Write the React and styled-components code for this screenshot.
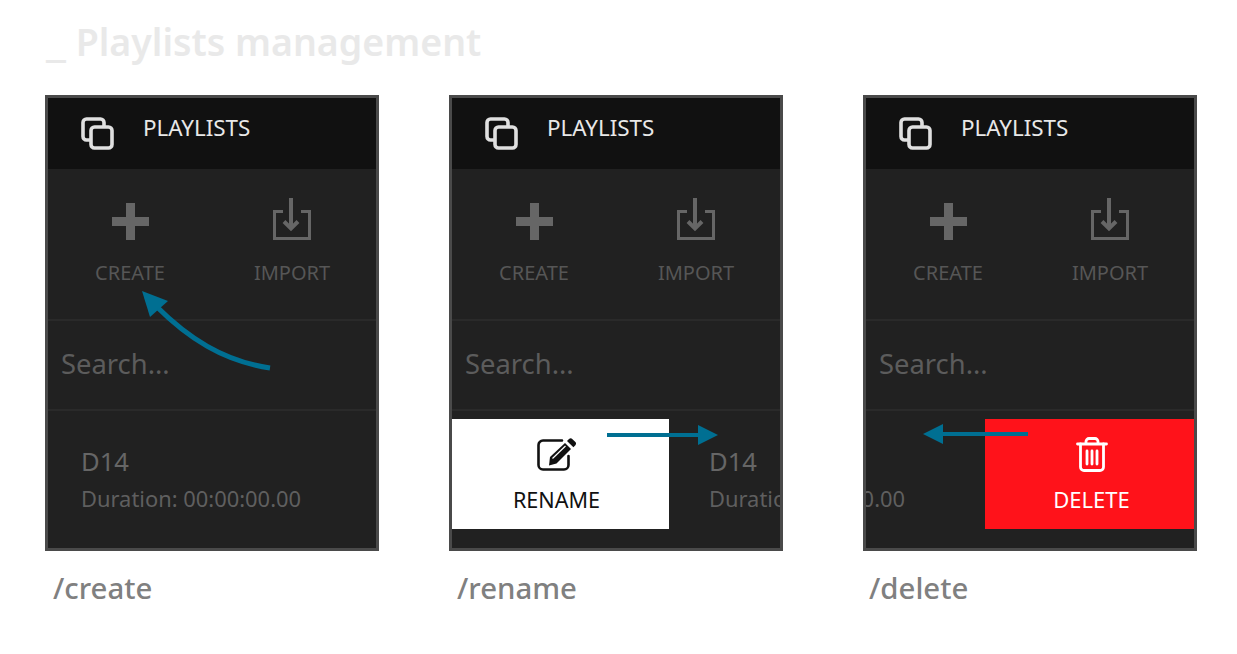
import React from "react";
import styled, { createGlobalStyle } from "styled-components";

const Global = createGlobalStyle`
  html, body { margin: 0; padding: 0; background: #fff; }
  body { font-family: "Noto Sans", "Open Sans", sans-serif; }
`;

const Page = styled.div`
  width: 1237px;
  height: 654px;
  box-sizing: border-box;
  padding: 17px 0 0 45px;
  overflow: hidden;
`;
const Title = styled.h1`
  margin: 0 0 25px 1px;
  height: 53px;
  font-size: 37.5px;
  line-height: 50px;
  font-weight: 600;
  color: #e9e9e9;
  white-space: nowrap;
`;
const Underscore = styled.span`
  font-size: 47px;
  line-height: 1px;
`;
const Columns = styled.div`
  display: flex;
`;
const Column = styled.section`
  width: 334px;
  margin-left: ${(p) => p.$gap || 0}px;
`;
const Phone = styled.div`
  position: relative;
  box-sizing: border-box;
  height: 456px;
  border: 3px solid #4a4a4a;
  background: #212121;
  display: flex;
  flex-direction: column;
  overflow: hidden;
`;
const Header = styled.header`
  height: 71px;
  box-sizing: border-box;
  flex: none;
  background: #111;
  display: flex;
  align-items: center;
  padding: 0 0 12px 33px;
  gap: 28px;
  color: #e8e8e8;
  font-size: 22.4px;
  line-height: 30px;
`;
const HeaderIcon = styled.div`
  display: flex;
  margin-top: 13px;
`;
const Actions = styled.div`
  height: 150px;
  flex: none;
  display: grid;
  grid-template-columns: 162px 162px;
  padding-left: 1px;
  border-bottom: 2px solid #2a2a2a;
`;
const Action = styled.div`
  display: flex;
  flex-direction: column;
  align-items: center;
  color: #565656;
  font-size: 20px;
  line-height: 26px;
  padding-top: 23px;
`;
const IconSlot = styled.div`
  height: 48px;
  margin-bottom: 20px;
  display: flex;
  align-items: flex-end;
  padding-left: ${(p) => p.$nudge || 0}px;
`;
const Search = styled.div`
  height: 88px;
  box-sizing: border-box;
  flex: none;
  display: flex;
  align-items: center;
  padding: 0 0 4px 13px;
  font-size: 27.4px;
  color: #5c5c5c;
`;
const Divider = styled.div`
  flex: none;
  height: 2px;
  background: #2a2a2a;
`;
const Row = styled.div`
  display: flex;
  align-items: stretch;
  height: 110px;
  margin-top: 8px;
  white-space: nowrap;
  overflow: hidden;
`;
const Item = styled.div`
  flex: none;
  width: 220px;
  margin-left: ${(p) => p.$left}px;
  display: flex;
  flex-direction: column;
  padding-top: 25px;
`;
const ItemName = styled.div`
  font-size: 25.6px;
  line-height: 36px;
  color: #666;
`;
const ItemMeta = styled.div`
  font-size: 21.9px;
  line-height: 30px;
  margin-top: 4px;
  color: #5f5f5f;
`;
const Swipe = styled.div`
  flex: none;
  width: ${(p) => p.$width}px;
  margin-left: ${(p) => (p.$auto ? "auto" : "0")};
  padding: 17px ${(p) => p.$right || 0}px 0 ${(p) => p.$leftPad || 0}px;
  background: ${(p) => p.$bg};
  color: ${(p) => p.$fg};
  display: flex;
  flex-direction: column;
  align-items: center;
  font-size: ${(p) => p.$size}px;
  line-height: 27px;
  box-sizing: border-box;
`;
const SwipeIcon = styled.div`
  height: 37px;
  margin-bottom: 13px;
  display: flex;
  align-items: center;
`;
const Caption = styled.div`
  margin: 19px 0 0 ${(p) => p.$left}px;
  font-size: 29.4px;
  line-height: 36px;
  font-weight: 500;
  color: #808080;
`;
const Overlay = styled.svg`
  position: absolute;
  left: 0;
  top: 0;
  pointer-events: none;
`;

const CopyIcon = () => (
  <svg width="34" height="34" viewBox="0 0 34 34" fill="none" stroke="#e0e0e0" strokeWidth="3.6">
    <rect x="2" y="2" width="21" height="21" rx="3.5" />
    <rect x="10" y="10" width="21" height="21" rx="3.5" fill="#111" />
  </svg>
);
const PlusIcon = () => (
  <svg width="37" height="37" viewBox="0 0 37 37" fill="#666">
    <rect x="14" y="0" width="9" height="37" />
    <rect x="0" y="14" width="37" height="9" />
  </svg>
);
const ImportIcon = () => (
  <svg width="38" height="42" viewBox="0 0 38 42" fill="none" stroke="#666">
    <path d="M10 13.5H1.5V40.5H36.5V13.5H28" strokeWidth="3" />
    <path d="M18 0V30" strokeWidth="4" />
    <path d="M11 23.5L18 30.5L25 23.5" strokeWidth="4" />
  </svg>
);
const EditIcon = () => (
  <svg width="41" height="34" viewBox="0 0 41 34">
    <path d="M26 2.5H7a4.5 4.5 0 0 0-4.5 4.5v20A4.5 4.5 0 0 0 7 31.5h21a4.5 4.5 0 0 0 4.5-4.5V18" fill="none" stroke="#111" strokeWidth="2.6" strokeLinecap="round" />
    <path d="M14 19L29 5l6 6L20.5 25.5l-7.5 2z" fill="#111" />
    <path d="M31 3l2-2c1-1 2.4-1 3.2-.1l3.2 3.2c.9.9.9 2.2 0 3.1l-2 2z" fill="#111" />
    <path d="M16.5 20.5L29.5 8" stroke="#fff" strokeWidth="1.2" />
  </svg>
);
const TrashIcon = () => (
  <svg width="32" height="35" viewBox="0 0 32 35" fill="none" stroke="#fff" strokeWidth="2.8" strokeLinecap="round">
    <path d="M1.5 7H30.5" />
    <path d="M4.5 7V30a3.5 3.5 0 0 0 3.5 3.5H24a3.5 3.5 0 0 0 3.5-3.5V7" />
    <path d="M10 6.5V4.5A3 3 0 0 1 13 1.5H19a3 3 0 0 1 3 3V6.5" />
    <path d="M11 14V27M16 14V27M21 14V27" />
  </svg>
);

const Panel = ({ children, row }) => (
  <Phone>
    <Header>
      <HeaderIcon><CopyIcon /></HeaderIcon>
      <span>PLAYLISTS</span>
    </Header>
    <Actions>
      <Action>
        <IconSlot $nudge={1}><PlusIcon /></IconSlot>
        CREATE
      </Action>
      <Action>
        <IconSlot><ImportIcon /></IconSlot>
        IMPORT
      </Action>
    </Actions>
    <Search>Search...</Search>
    <Divider />
    {row}
    {children}
  </Phone>
);

const Entry = ({ left }) => (
  <Item $left={left}>
    <ItemName>D14</ItemName>
    <ItemMeta>Duration: 00:00:00.00</ItemMeta>
  </Item>
);

const TEAL = "#006f92";

export default function App() {
  return (
    <Page>
      <Global />
      <Title><Underscore>_</Underscore> Playlists management</Title>
      <Columns>
        <Column>
          <Panel row={<Row><Entry left={33} /></Row>}>
            <Overlay width="328" height="450">
              <path d="M222 270C175 263 140 240 108 208" fill="none" stroke={TEAL} strokeWidth="5" />
              <path d="M94 193L120 203L102 219z" fill={TEAL} />
            </Overlay>
          </Panel>
          <Caption $left={8}>/create</Caption>
        </Column>
        <Column $gap={70}>
          <Panel
            row={
              <Row>
                <Swipe $width={217} $right={8} $size={21.6} $bg="#fff" $fg="#111">
                  <SwipeIcon><EditIcon /></SwipeIcon>
                  RENAME
                </Swipe>
                <Entry left={40} />
              </Row>
            }
          >
            <Overlay width="328" height="450">
              <rect x="155" y="335" width="92" height="4" fill={TEAL} />
              <path d="M266 337L246 327V347z" fill={TEAL} />
            </Overlay>
          </Panel>
          <Caption $left={8}>/rename</Caption>
        </Column>
        <Column $gap={80}>
          <Panel
            row={
              <Row>
                <Entry left={-181} />
                <Swipe $width={209} $auto $leftPad={4} $size={22} $bg="#ff121a" $fg="#fff">
                  <SwipeIcon><TrashIcon /></SwipeIcon>
                  DELETE
                </Swipe>
              </Row>
            }
          >
            <Overlay width="328" height="450">
              <rect x="76" y="334" width="86" height="4" fill={TEAL} />
              <path d="M57 336L77 326V346z" fill={TEAL} />
            </Overlay>
          </Panel>
          <Caption $left={6}>/delete</Caption>
        </Column>
      </Columns>
    </Page>
  );
}
